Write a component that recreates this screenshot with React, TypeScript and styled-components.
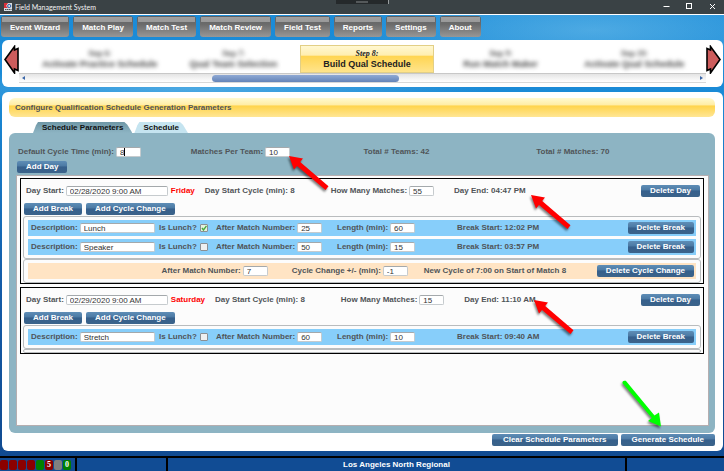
import React from "react";
import styled, { createGlobalStyle, css } from "styled-components";

const GlobalStyle = createGlobalStyle`
  *, *::before, *::after { box-sizing: border-box; }
  html, body { margin: 0; padding: 0; }
  body {
    font-family: "Liberation Sans", Arial, sans-serif;
    font-size: 8px;
    line-height: 10px;
    color: #505458;
  }
  button, input { font: inherit; margin: 0; }
`;

const ink = css`
  color: #505458;
  font-weight: 700;
  white-space: nowrap;
`;

const Page = styled.div`
  position: relative;
  min-height: 100vh;
  display: flex;
  flex-direction: column;
  background:
    radial-gradient(ellipse 260px 50px at 82% 30px, rgba(110, 190, 235, 0.6), transparent),
    radial-gradient(ellipse 300px 20px at 26% 89px, rgba(110, 190, 235, 0.6), transparent),
    linear-gradient(#1b8cd8 0, #1a8ad6 100px, #145ca8 60%, #10498f 100%);
`;

const TitleBar = styled.header`
  display: flex;
  align-items: center;
  height: 15px;
  padding: 0 7px 1px 4px;
  border-bottom: 1px solid #fff;
  background: #3a4245;
  color: #f4f4f4;
  font-family: Lato, "Open Sans", sans-serif;
`;

const AppTitle = styled.span`
  flex: 1;
  margin-left: 3px;
  font-size: 7px;
  white-space: nowrap;
`;

const TopHandle = styled.div`
  position: absolute;
  top: 0;
  left: 50%;
  width: 53px;
  height: 4px;
  margin-left: -26px;
  border-right: 1px solid #9a9fa1;
  background: #25292b;
  &::after {
    content: "";
    display: block;
    width: 12px;
    height: 2px;
    margin: 1px auto 0;
    background: #55595b;
  }
`;

const WindowButton = styled.button`
  display: flex;
  align-items: center;
  justify-content: center;
  width: 9px;
  height: 11px;
  margin-left: 14px;
  padding: 0;
  border: 0;
  background: none;
  color: #fff;
`;

const Nav = styled.nav`
  display: flex;
  gap: 4px;
  padding: 1px 1px 3px;
`;

const NavButton = styled.button`
  height: 21px;
  padding: 2px 9px 0;
  border: 0;
  border-radius: 3px;
  color: #fff;
  font-weight: 700;
  white-space: nowrap;
  background:
    linear-gradient(#a0a0a0, #999) center 1px / calc(100% - 2px) 5px no-repeat,
    linear-gradient(#5f6366 0, #6b6b6b 40%, #979797 100%);
`;

const Panel = styled.section`
  margin: 0 1px 0 2px;
  border-radius: 6px;
  background: #fff;
`;

const Wizard = styled(Panel)`
  display: flex;
  height: 47px;
  padding: 5px 2px 3px;
`;

const ArrowButton = styled.button`
  width: 15px;
  height: 29px;
  flex: none;
  padding: 0;
  border: 0;
  background: none;
  svg { display: block; }
`;

const Steps = styled.div`
  flex: 1;
  min-width: 0;
`;

const StepList = styled.ol`
  display: grid;
  grid-template-columns: repeat(5, 1fr);
  margin: 0;
  padding: 0 5px 0 14px;
  list-style: none;
`;

const Step = styled.li<{ $active?: boolean }>`
  display: flex;
  flex-direction: column;
  align-items: center;
  justify-content: center;
  height: 28px;
  white-space: nowrap;
  color: #222;
  ${(p) =>
    p.$active
      ? css`
          border: 1px solid #e2cf86;
          background: linear-gradient(#fff8d2 0, #ffeeb0 35%, #ffd552 40%, #ffe48c 100%);
        `
      : css`
          color: #444;
          filter: blur(2px);
        `}
`;

const StepNumber = styled.span`
  font: italic 700 8px/10px "Liberation Serif", serif;
`;

const StepName = styled.span`
  font-size: 9px;
  line-height: 11px;
  font-weight: 700;
`;

const ScrollBar = styled.div`
  display: flex;
  align-items: center;
  height: 10px;
  padding: 0 3px;
  border-top: 1px solid #c8c8c8;
  border-bottom: 1px solid #d8d8d8;
  background: linear-gradient(#e4e4e4, #fff);
`;

const ScrollTrack = styled.div`
  flex: 1;
  margin: 0 4px;
`;

const ScrollThumb = styled.div`
  width: 28%;
  height: 7px;
  margin-left: 27.5%;
  border-radius: 4px;
  background: linear-gradient(#8fa9d4, #6484b8);
`;

const Main = styled(Panel)`
  flex: 1;
  display: flex;
  flex-direction: column;
  margin-top: 5px;
  margin-bottom: 5px;
  padding: 6px 8px 5px 7px;
`;

const Heading = styled.h1`
  ${ink}
  height: 19px;
  margin: 0 0 5px;
  padding: 0 6px;
  border-radius: 6px;
  font-size: 8px;
  line-height: 20px;
  background: linear-gradient(#fffad0 0, #ffeda6 36%, #ffd44c 42%, #ffe695 100%);
`;

const Tabs = styled.div`
  display: flex;
  gap: 2px;
  padding-left: 24px;
`;

const Tab = styled.button<{ $selected?: boolean }>`
  height: 11px;
  padding: 0 9px;
  border: 0;
  color: #111;
  font-weight: 700;
  line-height: 11px;
  white-space: nowrap;
  background: ${(p) => (p.$selected ? "linear-gradient(#6f97a6, #8db4c3)" : "#c5e4f0")};
  clip-path: polygon(0 100%, 3px 30%, 5px 0, calc(100% - 8px) 0, calc(100% - 5px) 25%, 100% 100%);
`;

const Body = styled.div`
  flex: 1;
  display: flex;
  flex-direction: column;
  padding: 13px 6px 7px 7px;
  border-radius: 6px;
  background: #8db4c3;
`;

const Summary = styled.div`
  display: grid;
  grid-template-columns: repeat(4, 1fr);
  align-items: center;
  height: 11px;
  margin-bottom: 4px;
  padding-left: 2px;
`;

const Text = styled.span`
  ${ink}
`;

const Label = styled.label`
  ${ink}
  display: inline-flex;
  align-items: center;
  gap: 2px;
`;

const InputWrap = styled.span`
  position: relative;
  display: inline-flex;
`;

const Caret = styled.span`
  position: absolute;
  left: 8px;
  top: 1px;
  width: 1px;
  height: 8px;
  background: #000;
`;

const widths = { number: 25, text: 75, date: 102 };

const Input = styled.input<{ $size: keyof typeof widths }>`
  width: ${(p) => widths[p.$size]}px;
  height: 10px;
  padding: 1px 0 0 3px;
  border: 1px solid #c6cbce;
  border-top-color: #a4a9ac;
  border-radius: 2px;
  background: #fff;
  color: #333;
  font-weight: 400;
  line-height: 8px;
  outline: 0;
`;

const Check = styled.input`
  appearance: none;
  width: 8px;
  height: 8px;
  margin-left: 1px;
  border: 1px solid #8b8f92;
  border-radius: 1px;
  background: #eef0f1;
  &:checked {
    background: #e4f2de url("data:image/svg+xml,%3Csvg xmlns='http://www.w3.org/2000/svg' viewBox='0 0 6 6'%3E%3Cpath d='M1 3l1.5 2L5.5 .8' fill='none' stroke='%2349a942' stroke-width='1.4'/%3E%3C/svg%3E");
  }
`;

const Button = styled.button`
  height: 12px;
  padding: 0 9px;
  border: 0;
  border-radius: 2px;
  color: #fff;
  font-weight: 700;
  line-height: 12px;
  white-space: nowrap;
  background: linear-gradient(#5e8db6 0, #4d7ba5 40%, #36608c 50%, #3b638a 100%);
`;

const AddDay = styled(Button)`
  align-self: flex-start;
  margin: 0 0 2px 1px;
`;

const DayList = styled.div`
  flex: 1;
  display: flex;
  flex-direction: column;
  gap: 3px;
  padding: 2px 4px 2px 3px;
  border: 1px solid #b5aeb0;
  background: #fcfcfc;
`;

const DayBox = styled.section`
  padding: 5px 2px 0;
  border: 1px solid #000;
`;

const DayHeader = styled.div`
  display: flex;
  align-items: center;
  height: 14px;
  padding: 0 1px 0 3px;
`;

const Weekday = styled.strong`
  margin: 0 10px 0 3px;
  color: #f00;
`;

const MatchCount = styled(Label)`
  margin: 0 20px 0 36px;
`;

const RowButton = styled(Button)`
  margin-left: auto;
`;

const Actions = styled.div`
  display: flex;
  gap: 4px;
  margin: 5px 0 1px 1px;
`;

const Group = styled.div`
  display: flex;
  flex-direction: column;
  gap: 3px;
  min-height: 4px;
  border: 1px solid #b9bcbe;
  border-radius: 3px;
  &:not(:empty) { padding: 3px 4px; }
`;

const BreakRow = styled.div`
  display: grid;
  grid-template-columns: 128px 57px 121px 120px auto 1fr;
  align-items: center;
  height: 16px;
  padding: 0 2px 0 3px;
  background: #87cefa;
`;

const CycleRow = styled.div`
  display: flex;
  align-items: center;
  height: 16px;
  padding: 0 2px 0 20%;
  background: #ffe4c4;
`;

const CycleChange = styled(Label)`
  margin: 0 16px 0 24px;
`;

const Footer = styled.div`
  display: flex;
  justify-content: flex-end;
  gap: 3px;
  margin-top: 1px;
`;

const WideButton = styled(Button)`
  padding: 0 11px;
`;

const StatusBar = styled.footer`
  display: grid;
  grid-template-columns: 77px 91px 1fr 97px;
  height: 15px;
  border-top: 2px solid #000;
  background: #114c94;
  color: #fff;
  font-weight: 700;
`;

const StatusCell = styled.div`
  display: flex;
  align-items: center;
  justify-content: center;
  border-right: 2px solid #000;
  &:first-child { justify-content: flex-start; gap: 1px; }
  &:last-child { border-right: 0; }
`;

const Chip = styled.span<{ $color: string }>`
  width: 8px;
  height: 10px;
  border-radius: 2px;
  background: ${(p) => p.$color};
  text-align: center;
  font: 700 8px/10px "Liberation Serif", serif;
`;

const Pointer = styled.svg<{ $left: number; $top: number }>`
  position: absolute;
  left: ${(p) => p.$left}px;
  top: ${(p) => p.$top}px;
  overflow: visible;
  pointer-events: none;
  filter: drop-shadow(-1px 2px 1px rgba(0, 0, 0, 0.5));
`;

function RedPointer({ left, top }: { left: number; top: number }) {
  return (
    <Pointer $left={left} $top={top} width="40" height="34" fill="#f00" aria-hidden="true">
      <path d="M0 0L14 2.5L11.2 6L39.5 30.2L36.5 34L8 10L5 13.5Z" />
    </Pointer>
  );
}

function WizardArrow({ flip }: { flip?: boolean }) {
  return (
    <svg width="15" height="29" viewBox="0 0 15 29" aria-hidden="true">
      <path
        transform={flip ? "matrix(-1 0 0 1 15 0)" : undefined}
        d="M1 14.5L10.5 1.5V5L14 3.5V25.5L10.5 24V28Z"
        fill="#cd5c5c"
        stroke="#000"
        strokeWidth="1.6"
      />
    </svg>
  );
}

type Break = { name: string; lunch?: boolean; after: number; length: number; start: string };
type Cycle = { after: number; change: number; note: string };
type Day = { start: string; weekday: string; matches: number; end: string; breaks: Break[]; cycles: Cycle[] };

const days: Day[] = [
  {
    start: "02/28/2020 9:00 AM",
    weekday: "Friday",
    matches: 55,
    end: "04:47 PM",
    breaks: [
      { name: "Lunch", lunch: true, after: 25, length: 60, start: "12:02 PM" },
      { name: "Speaker", after: 50, length: 15, start: "03:57 PM" },
    ],
    cycles: [{ after: 7, change: -1, note: "New Cycle of 7:00 on Start of Match 8" }],
  },
  {
    start: "02/29/2020 9:00 AM",
    weekday: "Saturday",
    matches: 15,
    end: "11:10 AM",
    breaks: [{ name: "Stretch", after: 60, length: 10, start: "09:40 AM" }],
    cycles: [],
  },
];

const menu = ["Event Wizard", "Match Play", "Match Test", "Match Review", "Field Test", "Reports", "Settings", "About"];

const steps = [
  { n: 6, name: "Activate Practice Schedule" },
  { n: 7, name: "Qual Team Selection" },
  { n: 8, name: "Build Qual Schedule" },
  { n: 9, name: "Run Match Maker" },
  { n: 10, name: "Activate Qual Schedule" },
];

const chips = [
  { color: "#8b0000" },
  { color: "#8b0000" },
  { color: "#8b0000" },
  { color: "#8b0000" },
  { color: "#008000" },
  { color: "#8b0000", text: "5" },
  { color: "#808080" },
  { color: "#008000", text: "0" },
];

function DaySection({ day }: { day: Day }) {
  return (
    <DayBox>
      <DayHeader>
        <Label>
          Day Start: <Input $size="date" defaultValue={day.start} />
        </Label>
        <Weekday>{day.weekday}</Weekday>
        <Text>Day Start Cycle (min): 8</Text>
        <MatchCount>
          How Many Matches: <Input $size="number" defaultValue={day.matches} />
        </MatchCount>
        <Text>Day End: {day.end}</Text>
        <RowButton>Delete Day</RowButton>
      </DayHeader>
      <Actions>
        <Button>Add Break</Button>
        <Button>Add Cycle Change</Button>
      </Actions>
      <Group>
        {day.breaks.map((b) => (
          <BreakRow key={b.name}>
            <Label>
              Description: <Input $size="text" defaultValue={b.name} />
            </Label>
            <Label>
              Is Lunch? <Check type="checkbox" defaultChecked={b.lunch} />
            </Label>
            <Label>
              After Match Number: <Input $size="number" defaultValue={b.after} />
            </Label>
            <Label>
              Length (min): <Input $size="number" defaultValue={b.length} />
            </Label>
            <Text>Break Start: {b.start}</Text>
            <RowButton>Delete Break</RowButton>
          </BreakRow>
        ))}
      </Group>
      <Group>
        {day.cycles.map((c) => (
          <CycleRow key={c.after}>
            <Label>
              After Match Number: <Input $size="number" defaultValue={c.after} />
            </Label>
            <CycleChange>
              Cycle Change +/- (min): <Input $size="number" defaultValue={c.change} />
            </CycleChange>
            <Text>{c.note}</Text>
            <RowButton>Delete Cycle Change</RowButton>
          </CycleRow>
        ))}
      </Group>
    </DayBox>
  );
}

export default function App() {
  return (
    <>
      <GlobalStyle />
      <Page>
        <TitleBar>
          <svg width="8" height="8" viewBox="0 0 8 8" aria-hidden="true">
            <rect width="8" height="8" fill="#d7dde2" />
            <path d="M0 0H4L2 3L4 5H0Z" fill="#d8303a" />
            <circle cx="5.2" cy="3" r="1.6" fill="none" stroke="#2c62ac" />
            <path d="M1 6.5H7.5" stroke="#4a4f55" strokeDasharray="1.5 .5" />
          </svg>
          <AppTitle>Field Management System</AppTitle>
          <WindowButton aria-label="Minimize">
            <svg width="7" height="7"><path d="M0.5 3.5H6.5" stroke="currentColor" /></svg>
          </WindowButton>
          <WindowButton aria-label="Maximize">
            <svg width="7" height="7"><rect x=".5" y=".5" width="5" height="5" fill="none" stroke="currentColor" /></svg>
          </WindowButton>
          <WindowButton aria-label="Close">
            <svg width="7" height="7"><path d="M1 1L6 6M6 1L1 6" stroke="currentColor" /></svg>
          </WindowButton>
          <TopHandle />
        </TitleBar>

        <Nav>
          {menu.map((m) => (
            <NavButton key={m}>{m}</NavButton>
          ))}
        </Nav>

        <Wizard>
          <ArrowButton aria-label="Previous step"><WizardArrow /></ArrowButton>
          <Steps>
            <StepList>
              {steps.map((s) => (
                <Step key={s.n} $active={s.n === 8}>
                  <StepNumber>Step {s.n}:</StepNumber>
                  <StepName>{s.name}</StepName>
                </Step>
              ))}
            </StepList>
            <ScrollBar>
              <svg width="3" height="4" aria-hidden="true"><path d="M3 0L0 2L3 4Z" fill="#3a66a8" /></svg>
              <ScrollTrack><ScrollThumb /></ScrollTrack>
              <svg width="3" height="4" aria-hidden="true"><path d="M0 0L3 2L0 4Z" fill="#3a66a8" /></svg>
            </ScrollBar>
          </Steps>
          <ArrowButton aria-label="Next step"><WizardArrow flip /></ArrowButton>
        </Wizard>

        <Main>
          <Heading>Configure Qualification Schedule Generation Parameters</Heading>
          <Tabs role="tablist">
            <Tab role="tab" aria-selected="true" $selected>Schedule Parameters</Tab>
            <Tab role="tab" aria-selected="false">Schedule</Tab>
          </Tabs>
          <Body>
            <Summary>
              <Label>
                Default Cycle Time (min):
                <InputWrap>
                  <Input $size="number" defaultValue="8" />
                  <Caret />
                </InputWrap>
              </Label>
              <Label>
                Matches Per Team: <Input $size="number" defaultValue="10" />
              </Label>
              <Text>Total # Teams: 42</Text>
              <Text>Total # Matches: 70</Text>
            </Summary>
            <AddDay>Add Day</AddDay>
            <DayList>
              {days.map((d) => (
                <DaySection key={d.weekday} day={d} />
              ))}
            </DayList>
          </Body>
          <Footer>
            <WideButton>Clear Schedule Parameters</WideButton>
            <WideButton>Generate Schedule</WideButton>
          </Footer>
        </Main>

        <StatusBar>
          <StatusCell>
            {chips.map((c, i) => (
              <Chip key={i} $color={c.color}>{c.text}</Chip>
            ))}
          </StatusCell>
          <StatusCell />
          <StatusCell>Los Angeles North Regional</StatusCell>
          <StatusCell />
        </StatusBar>

        <RedPointer left={289} top={156} />
        <RedPointer left={531} top={195} />
        <RedPointer left={534} top={300} />
        <Pointer $left={622} $top={380} width="40" height="48" fill="#0f0" aria-hidden="true">
          <path d="M0.5 3.2Q0 0 3.8 0.8L32.5 35.5L37 32.5L39 46.5L26 41L29.8 38Z" />
        </Pointer>
      </Page>
    </>
  );
}
